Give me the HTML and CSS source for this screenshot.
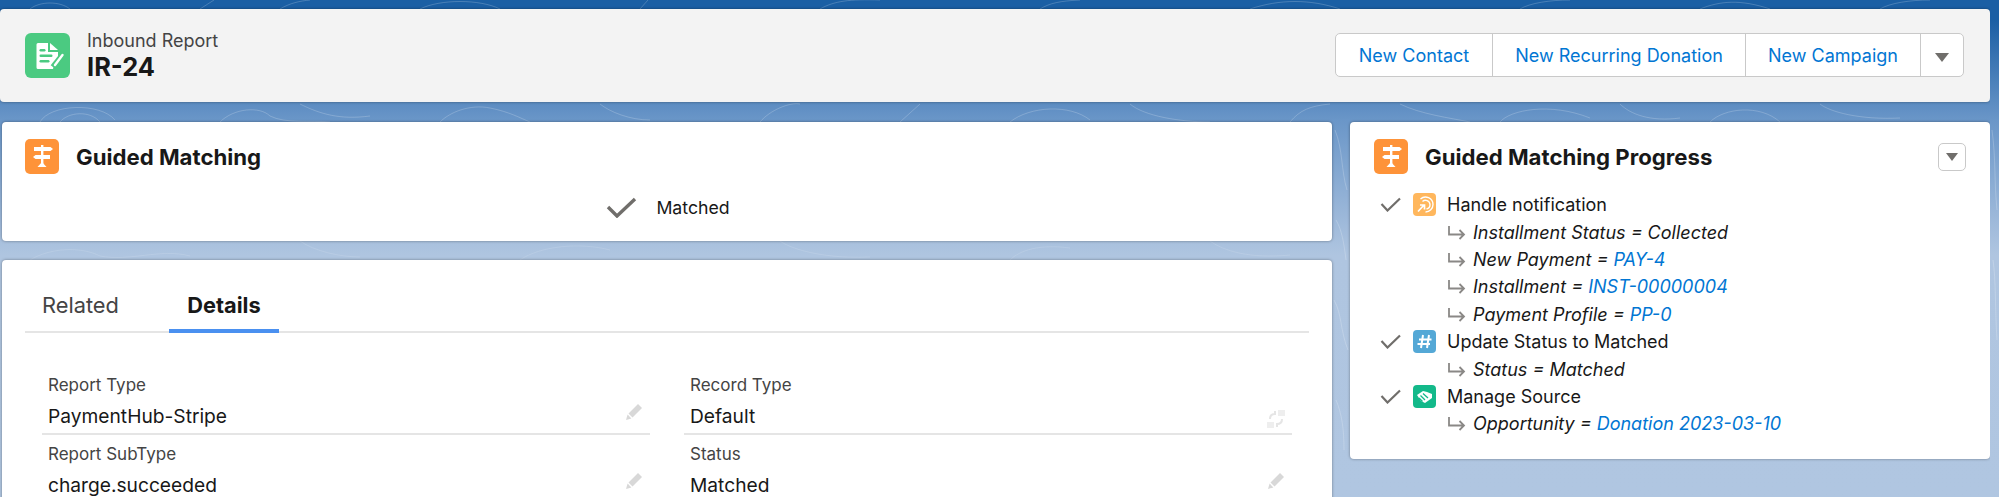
FILE: index.html
```html
<!DOCTYPE html>
<html lang="en">
<head>
<meta charset="UTF-8" />
<meta name="viewport" content="width=device-width, initial-scale=1" />
<title>IR-24 | Inbound Report</title>
<link rel="stylesheet" href="styles.css">
</head>
<body>
  <svg class="icon-defs" width="0" height="0" aria-hidden="true">
    <symbol id="i-sign" viewBox="0 0 34 35">
      <rect x="16" y="6" width="2.4" height="19" fill="#fff" />
      <path fill="#fff" d="M9 8h16.500l2.500 2-2.500 2H9zM25 16H10.500L8 18l2.500 2H25z" />
      <path fill="#fff" d="M17 23l4.500 5h-9z" />
    </symbol>
    <symbol id="i-pencil" viewBox="0 0 18 18">
      <path d="M13 1l4 4-9.500 9.500-4-4zM2.600 11.600l3.800 3.800L1 17z" />
    </symbol>
    <symbol id="i-tick" viewBox="0 0 21 15">
      <path d="M1.500 7l6 6.500L20 1.500" fill="none" stroke="#706e6b" stroke-width="2.200" />
    </symbol>
    <symbol id="i-hook" viewBox="0 0 19 15">
      <path d="M2 1v8.500h15M12.500 5l4.500 4.500-4.500 4.500" fill="none" stroke="#8a8886" stroke-width="1.800" />
    </symbol>
  </svg>

  <!-- faint contour lines behind the cards -->
  <svg class="contours" width="1999" height="497" viewBox="0 0 1999 497" fill="none" aria-hidden="true">
    <path d="M40 122c10-18 60-20 75-2M60 122c8-10 30-12 40 0M220 122c14-14 40-16 50-6 16 8 40 4 60 6M300 104c20 10 40 16 70 12M440 122c10-10 30-18 50-14 20 4 30 10 40 14M600 104c10 8 30 16 50 16M760 122c10-12 30-20 40-18M900 122l20-18M1010 122c20-16 60-18 80-2M1130 104c14 12 50 18 80 18M1290 122c10-12 20-16 40-18" />
    <path d="M1400 104c20 10 50 14 70 18M1500 122c10-12 50-20 90-4M1620 104c10 10 30 18 60 14M1710 122c14-14 50-18 70 0M1820 104c10 8 40 16 80 14" />
    <path d="M30 9c10-8 30-8 40 0M200 9l14-9M280 9c10-6 20-8 30-9M420 9c20-10 60-10 80 0M640 9l8-9M820 9c14-8 30-10 60-9M1040 9c10-6 20-8 40-9M1250 9c30-10 60-10 90 0M1520 9c10-6 30-9 50-9M1700 9c20-8 40-10 70 0M1880 9c10-6 30-9 50-9" />
    <path d="M1335 130c8 20 6 40 12 60M1336 220c6 10 8 24 10 40M1334 300c8 14 6 30 14 50M1336 400c6 14 8 30 8 50M1992 130c4 30 2 50 5 80M1993 260c3 20 2 50 4 80" />
    <path class="soft" d="M30 260c20-12 50-14 70-4 30 6 60-8 90 0M300 241c14 10 40 16 60 16M520 260c20-14 60-18 90-10M780 241c14 10 50 18 90 16M1010 260c10-10 30-16 60-12M1210 241c14 10 40 18 80 14" />
  </svg>

  <div class="page">
    <header class="record-head">
      <div class="record-title">
        <span class="head-icon">
          <svg viewBox="0 0 45 45" width="45" height="45">
            <path fill="#fff" d="M13 10h10v9h10v7l-4 6-1 4H13a1.500 1.500 0 0 1-1.500-1.500v-23A1.500 1.500 0 0 1 13 10z" />
            <path fill="#fff" d="M25 10l8 7h-8z" />
            <rect x="14.500" y="16" width="6" height="2.500" rx="1.200" fill="#4bca81" />
            <rect x="14.500" y="21.500" width="13" height="2.500" rx="1.200" fill="#4bca81" />
            <rect x="14.500" y="27" width="10" height="2.500" rx="1.200" fill="#4bca81" />
            <path stroke="#4bca81" stroke-width="6" d="M28 34l8-10" />
            <path stroke="#fff" stroke-width="2.400" stroke-linecap="round" d="M30 32l7.500-10" />
          </svg>
        </span>
        <div>
          <div class="record-type">Inbound Report</div>
          <h1 class="record-name">IR-24</h1>
        </div>
      </div>
      <div class="btn-group">
        <button class="btn btn-contact">New Contact</button>
        <button class="btn btn-recurring">New Recurring Donation</button>
        <button class="btn btn-campaign">New Campaign</button>
        <button class="btn btn-more"><span class="caret"></span></button>
      </div>
    </header>

    <div class="columns">
      <main class="col-main">
        <section class="card guided">
          <div class="card-head">
            <span class="sign-icon"><svg width="34" height="35"><use href="#i-sign" /></svg></span>
            <h2>Guided Matching</h2>
          </div>
          <div class="match-state">
            <svg class="big-check" viewBox="0 0 31 21" width="31" height="21" fill="none">
              <path d="M2 10l9 9L29 2" stroke="#706e6b" stroke-width="3.400" />
            </svg>
            <span>Matched</span>
          </div>
        </section>

        <section class="card details">
          <nav class="tabs">
            <a class="tab">Related</a>
            <a class="tab active">Details</a>
          </nav>
          <div class="fields">
            <div class="field">
              <div class="field-label">Report Type</div>
              <div class="field-value">PaymentHub-Stripe
                <svg class="edit" width="18" height="18"><use href="#i-pencil" /></svg>
              </div>
            </div>
            <div class="field">
              <div class="field-label">Record Type</div>
              <div class="field-value">Default
                <svg class="edit swap" viewBox="0 0 18 18" width="18" height="18"><rect x="11" y="0" width="7" height="6" /><rect x="0" y="12" width="7" height="6" /><path d="M3 9c0-3 2-5 5-5v-3M15 9c0 3-2 5-5 5v3" fill="none" stroke="#e5e5e5" stroke-width="2" /></svg>
              </div>
            </div>
            <div class="field">
              <div class="field-label">Report SubType</div>
              <div class="field-value">charge.succeeded
                <svg class="edit" width="18" height="18"><use href="#i-pencil" /></svg>
              </div>
            </div>
            <div class="field">
              <div class="field-label">Status</div>
              <div class="field-value">Matched
                <svg class="edit" width="18" height="18"><use href="#i-pencil" /></svg>
              </div>
            </div>
          </div>
        </section>
      </main>

      <aside class="card progress">
        <div class="card-head">
          <span class="sign-icon"><svg width="34" height="35"><use href="#i-sign" /></svg></span>
          <h2>Guided Matching Progress</h2>
          <button class="menu-btn"><span class="caret small"></span></button>
        </div>

        <ul class="steps">
          <li class="step">
            <svg class="tick" width="21" height="15"><use href="#i-tick" /></svg>
            <span class="step-icon amber">
              <svg viewBox="0 0 23 23" width="23" height="23" fill="none" stroke="#fff">
                <path stroke-width="1.400" d="M7.500 6a7.500 7.500 0 0 1 12.500 5.500A7.500 7.500 0 0 1 12.500 19M9.500 8.500a4.500 4.500 0 0 1 7.500 3A4.500 4.500 0 0 1 13.500 16" />
                <path stroke-width="1.700" d="M5 18.500l6-6.500M7 12h4.500v4.500" />
              </svg>
            </span>
            Handle notification
          </li>
          <li class="sub"><svg class="hook" width="19" height="15"><use href="#i-hook" /></svg><em>Installment Status = Collected</em></li>
          <li class="sub"><svg class="hook" width="19" height="15"><use href="#i-hook" /></svg><em>New Payment = <a>PAY-4</a></em></li>
          <li class="sub"><svg class="hook" width="19" height="15"><use href="#i-hook" /></svg><em>Installment = <a>INST-00000004</a></em></li>
          <li class="sub"><svg class="hook" width="19" height="15"><use href="#i-hook" /></svg><em>Payment Profile = <a>PP-0</a></em></li>
          <li class="step">
            <svg class="tick" width="21" height="15"><use href="#i-tick" /></svg>
            <span class="step-icon blue">
              <svg viewBox="0 0 23 23" width="23" height="23" fill="none" stroke="#fff" stroke-width="2">
                <path d="M10 5L8 18M16 5l-2 13M6 9.500h12.500M4.500 14H17" />
              </svg>
            </span>
            Update Status to Matched
          </li>
          <li class="sub"><svg class="hook" width="19" height="15"><use href="#i-hook" /></svg><em>Status = Matched</em></li>
          <li class="step">
            <svg class="tick" width="21" height="15"><use href="#i-tick" /></svg>
            <span class="step-icon green">
              <svg viewBox="0 0 23 23" width="23" height="23">
                <path fill="#fff" d="M4 10l6-4 4 1 5 2v4l-7 5-4-2z" />
                <path fill="none" stroke="#13b98a" stroke-width="1.300" d="M7.500 10.500l4.500 4.500M10 8.500l5 4.500M6 13l3.500 3.500" />
              </svg>
            </span>
            Manage Source
          </li>
          <li class="sub"><svg class="hook" width="19" height="15"><use href="#i-hook" /></svg><em>Opportunity = <a>Donation 2023-03-10</a></em></li>
        </ul>
      </aside>
    </div>
  </div>
</body>
</html>
```

FILE: styles.css
```css
:root {
  --text: #181818;
  --text-soft: #444;
  --link: #0176d3;
  --line: #e5e5e5;
  --border: #c9c9c9;
  --orange: #fe9339;
}

* {
  box-sizing: border-box;
}

html, body {
  margin: 0;
  padding: 0;
  height: 100%;
  overflow: hidden;
  font-family: Inter, "Liberation Sans", sans-serif;
  color: var(--text);
  background: linear-gradient(180deg, #1b5fa4 0, #1b5fa4 20px, #6a96c8 120px, #afc5e0 255px, #b0c6e1 100%);
}

h1, h2 {
  margin: 0;
}

.icon-defs {
  position: absolute;
}

.contours {
  position: absolute;
  left: 0;
  top: 0;
  stroke: rgba(255, 255, 255, 0.2);
  stroke-width: 1;
}

.contours .soft {
  stroke: rgba(255, 255, 255, 0.12);
}

.page {
  position: relative;
  width: 1990px;
  height: 497px;
  overflow: hidden;
  padding-top: 9px;
}

.card {
  background: #fff;
  border-radius: 4px;
  box-shadow: 0 0 3px rgba(0, 0, 0, 0.4);
}

/* record header */

.record-head {
  height: 93px;
  padding: 0 26px 0 25px;
  display: flex;
  align-items: center;
  justify-content: space-between;
  background: #f3f3f3;
  border-radius: 4px;
  box-shadow: 0 0 3px rgba(0, 0, 0, 0.4);
}

.record-title {
  display: flex;
  align-items: center;
  gap: 17px;
}

.head-icon {
  width: 45px;
  height: 45px;
  background: #4bca81;
  border-radius: 6px;
  display: block;
}

.record-type {
  font-size: 18px;
  line-height: 22px;
  padding-top: 1px;
  color: var(--text-soft);
}

.record-name {
  font-size: 25.400px;
  line-height: 30px;
  font-weight: 700;
}

.btn-group {
  display: flex;
  height: 44px;
  background: #fff;
  border: 1px solid var(--border);
  border-radius: 5px;
  margin-top: -1px;
}

.btn {
  font: inherit;
  font-size: 18px;
  color: var(--link);
  background: none;
  border: 0;
  border-left: 1px solid var(--border);
  padding: 0;
}

.btn-contact { width: 156px; border-left: 0; }
.btn-recurring { width: 253px; }
.btn-campaign { width: 175px; }
.btn-more { width: 43px; }

.caret {
  display: inline-block;
  border-left: 7px solid transparent;
  border-right: 7px solid transparent;
  border-top: 9px solid #706e6b;
}

.caret.small {
  border-left-width: 6px;
  border-right-width: 6px;
  border-top-width: 8px;
}

/* columns */

.columns {
  margin-top: 20px;
  display: grid;
  grid-template-columns: 1330px 640px;
  justify-content: space-between;
  padding-left: 2px;
}

.card-head {
  display: flex;
  align-items: center;
  gap: 17px;
}

.card-head h2 {
  font-size: 22.200px;
  font-weight: 700;
}

.sign-icon {
  width: 34px;
  height: 35px;
  background: var(--orange);
  border-radius: 5px;
  display: block;
}

.guided {
  height: 119px;
  padding: 17px 23px 0;
}

.match-state {
  margin-top: 23px;
  display: flex;
  align-items: center;
  justify-content: center;
  gap: 19px;
  font-size: 17.700px;
  padding-left: 2px;
}

.details {
  margin-top: 19px;
  height: 300px;
  padding: 0 23px;
}

/* tabs */

.tabs {
  height: 73px;
  display: flex;
  align-items: flex-end;
  gap: 50px;
  border-bottom: 2px solid var(--line);
}

.tab {
  width: 110px;
  height: 46px;
  padding-top: 5px;
  margin-bottom: -2px;
  text-align: center;
  font-size: 21.800px;
  color: var(--text-soft);
}

.tabs .tab:first-child {
  width: auto;
  padding-left: 17px;
}

.tab.active {
  font-weight: 700;
  color: var(--text);
  border-bottom: 4px solid #4a90f0;
}

/* detail fields */

.fields {
  margin-top: 42px;
  display: grid;
  grid-template-columns: 608px 608px;
  column-gap: 34px;
  row-gap: 9px;
  padding-left: 17px;
}

.field {
  height: 60px;
  border-bottom: 2px solid var(--line);
  padding-left: 6px;
}

.field-label {
  font-size: 17px;
  line-height: 20px;
  color: var(--text-soft);
}

.field-value {
  margin-top: 10px;
  font-size: 19.200px;
  line-height: 22px;
  position: relative;
}

.edit {
  position: absolute;
  right: 7px;
  top: -2px;
  fill: #d8d8d8;
}

.edit.swap {
  fill: #eee;
  top: 5px;
}

/* progress */

.progress {
  height: 337px;
  padding: 17px 24px 0;
}

.progress .card-head h2 {
  flex: 1;
}

.menu-btn {
  width: 28px;
  height: 28px;
  padding: 0;
  background: #fff;
  border: 1px solid var(--border);
  border-radius: 5px;
}

.steps {
  list-style: none;
  margin: 17px 0 0;
  padding: 0;
  font-size: 18px;
}

.step {
  display: flex;
  align-items: center;
  height: 27.400px;
  padding-left: 6px;
}

.tick {
  margin-right: 12px;
}

.step-icon {
  width: 23px;
  height: 23px;
  margin-right: 11px;
  border-radius: 4px;
  display: block;
}

.step-icon.amber { background: #ffb75d; }
.step-icon.blue { background: #54a8d6; }
.step-icon.green { background: #13b98a; }

.sub {
  height: 27.400px;
  padding-left: 73px;
  display: flex;
  align-items: center;
}

.hook {
  margin-right: 7px;
}

.sub a {
  color: var(--link);
}
```
